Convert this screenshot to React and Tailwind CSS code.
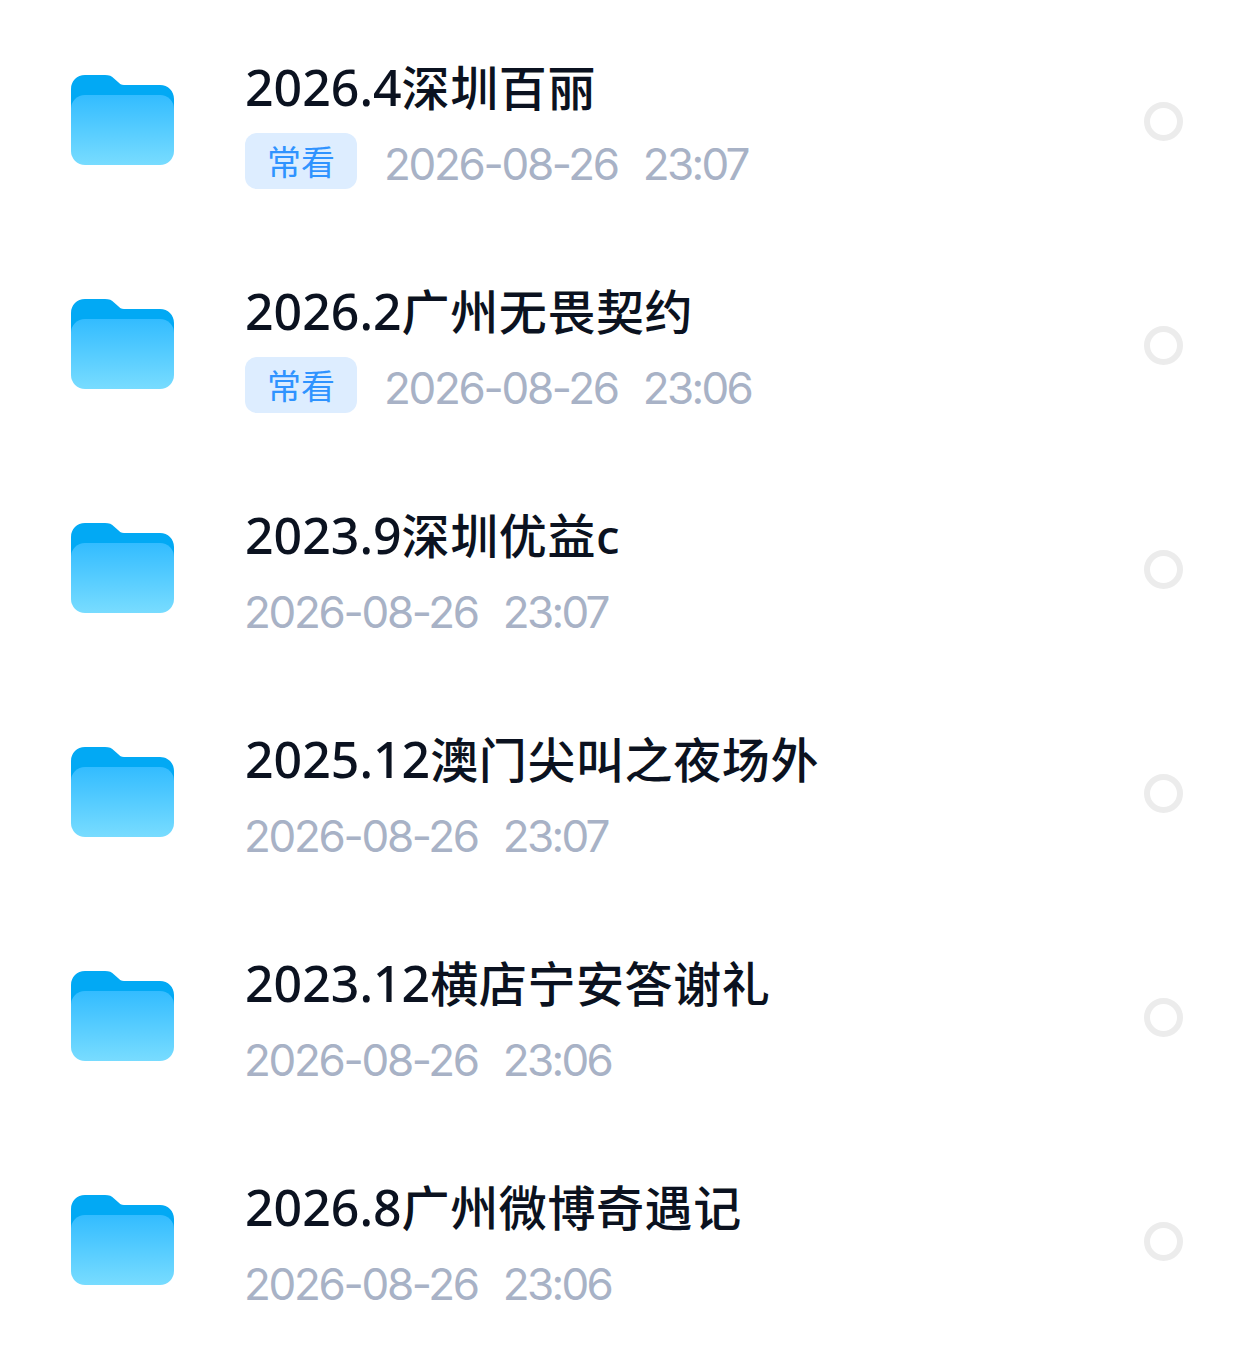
const items = [
  { num: '2026.4', name: '深圳百丽', time: '23:07', tag: true },
  { num: '2026.2', name: '广州无畏契约', time: '23:06', tag: true },
  { num: '2023.9', name: '深圳优益c', time: '23:07' },
  { num: '2025.12', name: '澳门尖叫之夜场外', time: '23:07' },
  { num: '2023.12', name: '横店宁安答谢礼', time: '23:06' },
  { num: '2026.8', name: '广州微博奇遇记', time: '23:06' },
]

function FolderIcon() {
  return (
    <svg width="103" height="90" viewBox="0 0 103 90" className="shrink-0">
      <defs>
        <linearGradient id="folderFront" x1="0" y1="0" x2="0" y2="1">
          <stop offset="0" stopColor="#33bcff" />
          <stop offset="1" stopColor="#78dcff" />
        </linearGradient>
      </defs>
      <path
        d="M0 14C0 6 6 0 14 0H34C38 0 41 1 43 3.500L47 7C49 9 50 10 53 10H89C97 10 103 16 103 24V50H0Z"
        fill="#02a9f4"
      />
      <rect x="0" y="20" width="103" height="70" rx="14" fill="url(#folderFront)" />
    </svg>
  )
}

function Row({ item }) {
  return (
    <div className="flex h-[224px] items-center pl-[71px] pr-[77px]">
      <FolderIcon />
      <div className="ml-[71px] flex-1 pt-[3px]">
        <div className="text-[48px] leading-[64px] font-medium tracking-[0.6px] text-[#0b1220]">
          <span className="text-[50px] tracking-normal">{item.num}</span>
          {item.name}
        </div>
        <div className="mt-[13px] flex h-[56px] items-center">
          {item.tag && (
            <span className="mr-[28px] flex h-[56px] w-[112px] items-center justify-center rounded-[12px] bg-[#ddedff] font-['Noto_Sans_CJK_SC',sans-serif] text-[34px] text-[#2f93ff]">
              常看
            </span>
          )}
          <span className="-ml-px pt-[6px] font-['Inter',sans-serif] text-[44px] tracking-[-2.3px] text-[#a8b2c6]">
            2026-08-26
          </span>
          <span className="ml-[25px] pt-[6px] font-['Inter',sans-serif] text-[44px] tracking-[-2.7px] text-[#a8b2c6]">
            {item.time}
          </span>
        </div>
      </div>
      <div className="mt-[3px] size-[39px] rounded-full border-[6px] border-[#ececec]" />
    </div>
  )
}

export default function App() {
  return (
    <div className="min-h-[1372px] bg-white pt-[8px] font-['Noto_Sans','Noto_Sans_CJK_SC',sans-serif]">
      {items.map((item) => (
        <Row key={item.num + item.name} item={item} />
      ))}
    </div>
  )
}
